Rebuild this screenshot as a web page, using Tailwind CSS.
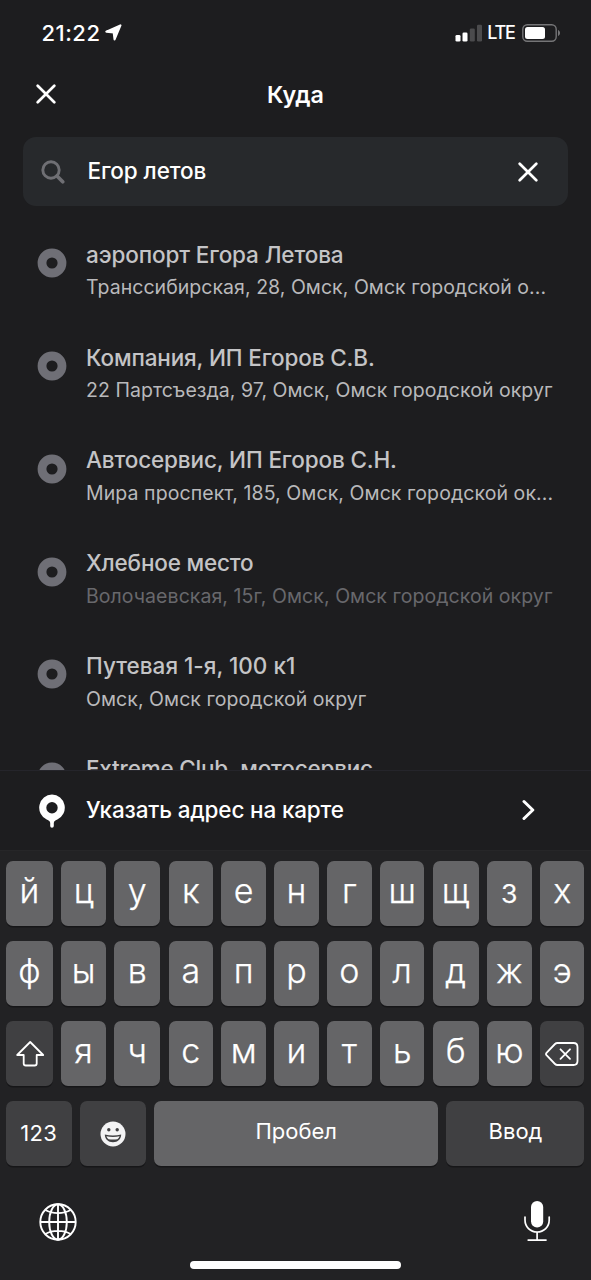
<!DOCTYPE html>
<html lang="ru">
<head>
<meta charset="utf-8">
<title>Куда</title>
<script src="https://cdn.jsdelivr.net/npm/@tailwindcss/browser@4"></script>
</head>
<body class="bg-[#1d1d1f]">
<div class="flex h-[1280px] w-[591px] flex-col overflow-hidden bg-[#1d1d1f] font-['Inter','Noto_Sans',sans-serif] text-white">
  <!-- Status bar -->
  <header class="flex h-[64px] shrink-0 items-center justify-between pt-[1px] pr-[31px] pl-[41.500px]">
    <div class="flex items-center gap-[5px]">
      <span class="text-[22px] leading-[30px] font-medium tracking-[0.5px]">21:22</span>
      <svg class="size-[17px]" viewBox="0 0 16 16"><path d="M14.500 1.300 1.300 7.200l6.900.7.800 6.600Z" fill="#fff" stroke="#fff" stroke-width="2" stroke-linejoin="round"/></svg>
    </div>
    <div class="flex items-center">
      <svg class="h-[18px] w-[28px]" viewBox="0 0 28 18"><rect x=".5" y="11" width="5" height="6.500" rx="1.300" fill="#fff"/><rect x="7.500" y="8.500" width="5" height="9" rx="1.300" fill="#fff"/><rect x="14.800" y="4.500" width="5" height="13" rx="1.300" fill="#4b4b4d"/><rect x="22" y=".8" width="5" height="16.700" rx="1.300" fill="#4b4b4d"/></svg>
      <span class="ml-[4.500px] text-[18px] leading-[30px] font-medium tracking-[-1.3px]">LTE</span>
      <svg class="ml-[7.500px] h-[18px] w-[38px]" viewBox="0 0 38 18"><rect x=".8" y=".8" width="33.400" height="16.400" rx="4.500" fill="none" stroke="#757577" stroke-width="1.400"/><rect x="3" y="3" width="20" height="12" rx="2.500" fill="#fff"/><path d="M36 6v6c1.300-.5 2-1.700 2-3s-.7-2.500-2-3Z" fill="#757577"/></svg>
    </div>
  </header>

  <!-- Title bar -->
  <div class="grid h-[73px] shrink-0 grid-cols-[1fr_auto_1fr] items-start pt-[16px]">
    <svg class="mt-[4px] ml-[36px] size-[20px]" viewBox="0 0 20 20"><path d="m1.700 1.700 16.600 16.600M18.300 1.700 1.700 18.300" stroke="#fff" stroke-width="2.700" stroke-linecap="round"/></svg>
    <h1 class="text-[23.300px] leading-[30px] font-semibold">Куда</h1>
  </div>

  <!-- Search field -->
  <div class="mx-[23px] flex h-[69px] shrink-0 items-center rounded-[13px] bg-[#27292c] pr-[30px] pl-[18px]">
    <svg class="size-[24px]" viewBox="0 0 24 24" fill="none" stroke="#6f6f74"><circle cx="10" cy="10" r="8.200" stroke-width="2.900"/><path d="m16 16 5.700 5.700" stroke-width="3.700" stroke-linecap="round"/></svg>
    <span class="mb-[2px] ml-[22.500px] text-[22.500px] leading-[30px] font-medium tracking-[-0.1px]">Егор летов</span>
    <svg class="ml-auto size-[20px]" viewBox="0 0 20 20"><path d="m1.700 1.700 16.600 16.600M18.300 1.700 1.700 18.300" stroke="#fff" stroke-width="2.700" stroke-linecap="round"/></svg>
  </div>

  <!-- Suggestions -->
  <ul class="h-[564px] shrink-0 overflow-hidden pt-[33.700px] text-[#c4c4c6]">
    <li class="flex h-[102.850px]"><svg class="mt-[8.300px] ml-[36.500px] size-[30px] shrink-0" viewBox="0 0 30 30"><circle cx="15" cy="15" r="10" fill="none" stroke="#6f6f76" stroke-width="8.800"/></svg><div class="ml-[19.500px] whitespace-nowrap"><p class="text-[22.500px] leading-[30px] font-medium tracking-[-0.12px]">аэропорт Егора Летова</p><p class="mt-[2.800px] text-[19.500px] leading-[30px] tracking-[0.04px] text-[#b9b9bb]">Транссибирская, 28, Омск, Омск городской о...</p></div></li>
    <li class="flex h-[102.850px]"><svg class="mt-[8.300px] ml-[36.500px] size-[30px] shrink-0" viewBox="0 0 30 30"><circle cx="15" cy="15" r="10" fill="none" stroke="#6f6f76" stroke-width="8.800"/></svg><div class="ml-[19.500px] whitespace-nowrap"><p class="text-[22.500px] leading-[30px] font-medium tracking-[-0.14px]">Компания, ИП Егоров С.В.</p><p class="mt-[2.800px] text-[19.500px] leading-[30px] tracking-[0.04px] text-[#b9b9bb]">22 Партсъезда, 97, Омск, Омск городской округ</p></div></li>
    <li class="flex h-[102.850px]"><svg class="mt-[8.300px] ml-[36.500px] size-[30px] shrink-0" viewBox="0 0 30 30"><circle cx="15" cy="15" r="10" fill="none" stroke="#6f6f76" stroke-width="8.800"/></svg><div class="ml-[19.500px] whitespace-nowrap"><p class="text-[22.500px] leading-[30px] font-medium tracking-[-0.14px]">Автосервис, ИП Егоров С.Н.</p><p class="mt-[2.800px] text-[19.500px] leading-[30px] tracking-[0.08px] text-[#b9b9bb]">Мира проспект, 185, Омск, Омск городской ок...</p></div></li>
    <li class="flex h-[102.850px]"><svg class="mt-[8.300px] ml-[36.500px] size-[30px] shrink-0" viewBox="0 0 30 30"><circle cx="15" cy="15" r="10" fill="none" stroke="#6f6f76" stroke-width="8.800"/></svg><div class="ml-[19.500px] whitespace-nowrap"><p class="text-[22.500px] leading-[30px] font-medium tracking-[-0.18px]">Хлебное место</p><p class="mt-[2.800px] text-[19.500px] leading-[30px] tracking-[0.06px] text-[#68686c]">Волочаевская, 15г, Омск, Омск городской округ</p></div></li>
    <li class="flex h-[102.850px]"><svg class="mt-[8.300px] ml-[36.500px] size-[30px] shrink-0" viewBox="0 0 30 30"><circle cx="15" cy="15" r="10" fill="none" stroke="#6f6f76" stroke-width="8.800"/></svg><div class="ml-[19.500px] whitespace-nowrap"><p class="text-[22.500px] leading-[30px] font-medium">Путевая 1-я, 100 к1</p><p class="mt-[2.800px] text-[19.500px] leading-[30px] tracking-[0.06px] text-[#b9b9bb]">Омск, Омск городской округ</p></div></li>
    <li class="flex h-[102.850px]"><svg class="mt-[8.300px] ml-[36.500px] size-[30px] shrink-0" viewBox="0 0 30 30"><circle cx="15" cy="15" r="10" fill="none" stroke="#6f6f76" stroke-width="8.800"/></svg><div class="ml-[19.500px] whitespace-nowrap"><p class="text-[22.500px] leading-[30px] font-medium tracking-[-0.2px]">Extreme Club, мотосервис</p></div></li>
  </ul>

  <!-- Pick on map -->
  <div class="flex h-[80px] shrink-0 items-center border-t border-[#25252b] pr-[55px] pl-[37.500px]">
    <svg class="mt-[1px] h-[34px] w-[28px]" viewBox="0 0 28 34"><path fill-rule="evenodd" d="M14 .5a13.200 13.200 0 0 1 5.300 25.100c-2.300 1.100-3.300 1.600-3.500 3.400V32a1.800 1.800 0 0 1-3.600 0V29c-.2-1.800-1.200-2.300-3.500-3.400A13.200 13.200 0 0 1 14 .5Zm0 7.500a5.700 5.700 0 1 0 0 11.400A5.700 5.700 0 0 0 14 8Z" fill="#fff"/></svg>
    <span class="mb-[2px] ml-[20.500px] text-[22.500px] leading-[30px] font-medium tracking-[-0.16px]">Указать адрес на карте</span>
    <svg class="mb-[2px] ml-auto h-[22px] w-[14px]" viewBox="0 0 14 22" fill="none" stroke="#fff" stroke-width="3"><path d="m2 2.500 8.800 8.500L2 19.500" stroke-linecap="round" stroke-linejoin="round"/></svg>
  </div>

  <!-- Keyboard -->
  <section class="flex h-[430px] shrink-0 flex-col border-t border-[#262628] bg-[#222224] pt-[10.300px] pl-[6px]">
    <div class="grid w-[578.500px] grid-cols-[47px_44.5px_46px_44.5px_44.5px_44.5px_44.5px_44.5px_46px_44.5px_44.5px] justify-between gap-y-[15.700px] text-center text-[34px] leading-[60px] font-light [-webkit-text-stroke:0.25px_white] *:h-[64.300px] *:rounded-[7px] *:bg-[#656567] *:shadow-[0_1.5px_0_#161618]">
      <div>й</div><div>ц</div><div>у</div><div>к</div><div>е</div><div>н</div><div>г</div><div>ш</div><div>щ</div><div>з</div><div>х</div>
      <div>ф</div><div>ы</div><div>в</div><div>а</div><div>п</div><div>р</div><div>о</div><div>л</div><div>д</div><div>ж</div><div>э</div>
      <div class="flex items-center justify-center bg-[#404042]!"><svg class="mt-[2px] h-[28px] w-[30px]" viewBox="0 0 30 28" fill="none" stroke="#fff" stroke-width="1.800" stroke-linejoin="round"><path d="M15.200 2 28.200 15h-6.500v8.500q0 2-2 2h-9q-2 0-2-2V15H2.200Z"/></svg></div>
      <div>я</div><div>ч</div><div>с</div><div>м</div><div>и</div><div>т</div><div>ь</div><div>б</div><div>ю</div>
      <div class="flex items-center justify-center bg-[#404042]!"><svg class="mt-[1.500px] h-[26px] w-[34px]" viewBox="0 0 34 26" fill="none" stroke="#fff" stroke-width="1.800" stroke-linejoin="round" stroke-linecap="round"><path d="M12.500 2h16q4 0 4 4v14q0 4-4 4h-16q-1.500 0-2.500-1L1.500 14.200q-1-1.200 0-2.400L10 3q1-1 2.500-1Z"/><path d="m15.500 8.300 9.500 9.500m0-9.500-9.500 9.500"/></svg></div>
    </div>
    <div class="mt-[15.700px] grid w-[578.500px] grid-cols-[65.5px_66px_284px_138px] justify-between text-center text-[22px] *:h-[64.300px] *:rounded-[7px] *:shadow-[0_1.5px_0_#161618]">
      <div class="bg-[#404042] leading-[65px] tracking-[0.3px]">123</div>
      <div class="flex items-center justify-center bg-[#404042]"><svg class="mt-[1px] size-[26px]" viewBox="0 0 26 26"><circle cx="13" cy="13" r="12.500" fill="#f3f3f4"/><circle cx="8.800" cy="8.800" r="1.700" fill="#404042"/><circle cx="17.200" cy="8.800" r="1.700" fill="#404042"/><path d="M4.800 13.500c5 1.200 11.400 1.200 16.400 0 0 4.500-3.400 7.700-8.200 7.700s-8.200-3.200-8.200-7.700Z" fill="#404042"/><path d="M6.400 15.300c4 .9 9.200.9 13.200 0-.5 1.300-1.200 2.200-2.200 3-2.700.4-6.100.4-8.800 0-1-.8-1.700-1.700-2.200-3Z" fill="#f3f3f4"/></svg></div>
      <div class="bg-[#656567] leading-[61px]">Пробел</div>
      <div class="bg-[#404042] leading-[61px]">Ввод</div>
    </div>
    <div class="flex items-start justify-between pt-[34px] pr-[40px] pl-[33px]">
      <svg class="mt-[3.500px] size-[38px]" viewBox="0 0 38 38" fill="none" stroke="#fff" stroke-width="1.900"><circle cx="19" cy="19" r="17.700"/><ellipse cx="19" cy="19" rx="8.800" ry="17.700"/><path d="M19 1.300v35.400M1.300 19h35.400M6 6.800c7.500 4.400 18.500 4.400 26 0M6 31.200c7.500-4.400 18.500-4.400 26 0"/></svg>
      <svg class="h-[42px] w-[28px]" viewBox="0 0 28 42" fill="none" stroke="#fff" stroke-width="1.700" stroke-linecap="round"><rect x="8" y="1" width="12.200" height="26.500" rx="6.100" fill="#fff" stroke="none"/><path d="M2 17v3c0 7 5.300 12 12.100 12s12.100-5 12.100-12v-3M14.100 32v8M5.200 40.100h17.800"/></svg>
    </div>
    <div class="mt-[19.500px] ml-[184px] h-[7.500px] w-[211px] rounded-full bg-white"></div>
  </section>
</div>
</body>
</html>
